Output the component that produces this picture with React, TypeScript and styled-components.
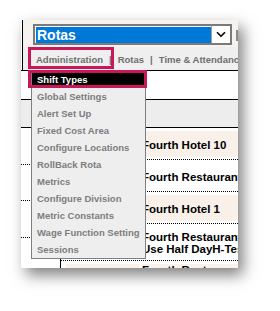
import React from "react";
import styled, { createGlobalStyle } from "styled-components";

const Global = createGlobalStyle`
  html, body { margin: 0; padding: 0; background: #fff; width: 280px; height: 311px; overflow: hidden; }
  body { font-family: "Liberation Sans", Arial, sans-serif; }
`;

const Stage = styled.div`
  width: 280px;
  height: 311px;
  box-sizing: border-box;
  padding: 20px 0 0 21px;
`;

const Paper = styled.div`
  position: relative;
  width: 217px;
  height: 248px;
  overflow: hidden;
  background: #fff;
  box-shadow: 5px 7px 14px rgba(0, 0, 0, 0.5);
`;

const Header = styled.div`
  margin-left: 1px;
  border-left: 1px solid #000;
`;

const TopBar = styled.div`
  height: 27px;
  box-sizing: border-box;
  background: #f7f2ed;
  display: flex;
  align-items: flex-start;
  padding: 4px 0 0 10px;
  white-space: nowrap;
`;

const Select = styled.div`
  flex: none;
  width: 199px;
  height: 21px;
  box-sizing: border-box;
  border: 2px solid #7a7a7a;
  background: #fff;
  display: flex;
`;

const SelectValue = styled.div`
  flex: 1;
  height: 16px;
  margin: 1px 0 0 1px;
  background: #0078d7;
  color: #fff;
  font-weight: bold;
  font-size: 14px;
  line-height: 16px;
  padding-left: 1px;
`;

const SelectArrow = styled.div`
  width: 18px;
  border-left: 1px solid #a0a0a0;
  background: #fff;
  display: flex;
  align-items: center;
  justify-content: center;
`;

const NextControl = styled.div`
  flex: none;
  width: 10px;
  height: 11px;
  margin: 6px 0 0 4px;
  box-sizing: border-box;
  border: 2px solid #8a8a8a;
  background: #e8e8e8;
`;

const MenuBar = styled.div`
  height: 23px;
  box-sizing: border-box;
  background: #efefef;
  display: flex;
  align-items: center;
  padding: 3px 0 0 13px;
  color: #6e6e6e;
  font-weight: bold;
  font-size: 9.5px;
  line-height: 12px;
  white-space: nowrap;
`;

const MenuItem = styled.span<{ $callout?: boolean }>`
  position: relative;
  ${(p) =>
    p.$callout
      ? `&::after {
    content: "";
    position: absolute;
    top: -7px;
    left: -8px;
    right: -11px;
    bottom: -3px;
    border: 3px solid #c8185a;
  }`
      : ""}
`;

const Sep = styled.span`
  margin: 0 6px;
`;

const HeadRow = styled.div<{ $shade?: boolean; $last?: boolean }>`
  height: ${(p) => (p.$last ? 27 : 28)}px;
  border-top: 1px solid #000;
  border-bottom: ${(p) => (p.$last ? "1px solid #000" : "none")};
  background: ${(p) => (p.$shade ? "#ededed" : "#fff")};
`;

const Body = styled.div`
  display: flex;
`;

const LeftCol = styled.div`
  width: 39px;
  flex: none;
  border-right: 1px solid #000;
  min-height: 200px;
`;

const LeftCell = styled.div`
  height: 36.5px;
  box-sizing: border-box;
  border-bottom: 1px dotted #000;
`;

const Rows = styled.div`
  flex: 1;
  min-width: 0;
`;

const DataRow = styled.div`
  display: grid;
  grid-template-columns: 81px 1fr;
  padding: 3px 0 2px;
  border-bottom: 1px dotted #000;
`;

const MidCell = styled.div<{ $alt?: boolean }>`
  margin: 0 3px 0 5px;
  background: ${(p) => (p.$alt ? "#f9f0ea" : "#fff")};
`;

const NameCell = styled.div<{ $alt?: boolean; $top?: boolean }>`
  min-height: 26px;
  box-sizing: border-box;
  padding: ${(p) => (p.$top ? "0" : "4px 0 3px")};
  display: flex;
  align-items: ${(p) => (p.$top ? "flex-start" : "center")};
  background: ${(p) => (p.$alt ? "#f9f0ea" : "#fff")};
  color: #000;
  font-weight: bold;
  font-size: 11.5px;
  line-height: 12px;
  white-space: nowrap;
`;

const Dropdown = styled.div`
  position: absolute;
  left: 10px;
  top: 50px;
  width: 115px;
  box-sizing: border-box;
  border: 1px solid #7f7f7f;
  background: #eeeeee;
`;

const Option = styled.div<{ $active?: boolean }>`
  position: relative;
  height: 17px;
  line-height: 17px;
  padding-left: 5px;
  font-weight: bold;
  font-size: 9.5px;
  white-space: nowrap;
  color: ${(p) => (p.$active ? "#fff" : "#7d7d7d")};
  background: ${(p) => (p.$active ? "#000" : "transparent")};
  ${(p) =>
    p.$active
      ? `&::after {
    content: "";
    position: absolute;
    top: -1px;
    left: -4px;
    right: -2px;
    bottom: 0;
    border: 3px solid #c8185a;
  }`
      : ""}
`;

const options = [
  "Shift Types",
  "Global Settings",
  "Alert Set Up",
  "Fixed Cost Area",
  "Configure Locations",
  "RollBack Rota",
  "Metrics",
  "Configure Division",
  "Metric Constants",
  "Wage Function Setting",
  "Sessions",
];

const rows: { lines: string[]; alt: boolean; top?: boolean }[] = [
  { lines: ["Fourth Hotel 10"], alt: true },
  { lines: ["Fourth Restaurant 2"], alt: false },
  { lines: ["Fourth Hotel 1"], alt: true },
  { lines: ["Fourth Restaurant 3", "Use Half DayH-Test"], alt: false },
  { lines: ["Fourth Restaurant 4"], alt: true, top: true },
];

const Chevron = () => (
  <svg width="10" height="7" viewBox="0 0 10 7">
    <polyline points="1,1.2 5,5.2 9,1.2" fill="none" stroke="#000" strokeWidth="1.6" />
  </svg>
);

export default function App() {
  return (
    <>
      <Global />
      <Stage>
        <Paper>
          <Header>
            <TopBar>
              <Select>
                <SelectValue>Rotas</SelectValue>
                <SelectArrow>
                  <Chevron />
                </SelectArrow>
              </Select>
              <NextControl />
            </TopBar>
            <MenuBar>
              <MenuItem $callout>Administration</MenuItem>
              <Sep>|</Sep>
              <MenuItem>Rotas</MenuItem>
              <Sep>|</Sep>
              <MenuItem>Time &amp; Attendance</MenuItem>
            </MenuBar>
          </Header>
          <HeadRow />
          <HeadRow $shade $last />
          <Body>
            <LeftCol>
              <LeftCell />
              <LeftCell />
              <LeftCell />
            </LeftCol>
            <Rows>
              {rows.map((r, i) => (
                <DataRow key={i}>
                  <MidCell $alt={r.alt} />
                  <NameCell $alt={r.alt} $top={r.top}>
                    <div>
                      {r.lines.map((l, j) => (
                        <div key={j}>{l}</div>
                      ))}
                    </div>
                  </NameCell>
                </DataRow>
              ))}
            </Rows>
          </Body>
          <Dropdown>
            {options.map((o, i) => (
              <Option key={o} $active={i === 0}>
                {o}
              </Option>
            ))}
          </Dropdown>
        </Paper>
      </Stage>
    </>
  );
}
